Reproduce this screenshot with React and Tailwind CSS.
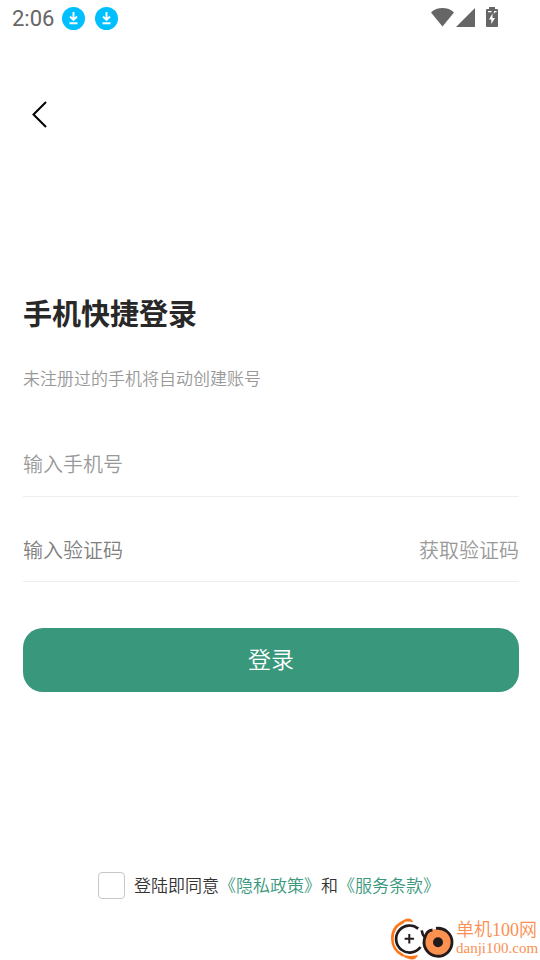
import { useState } from "react";

function StatusBar() {
  return (
    <div className="flex h-9 items-center justify-between pl-3 pr-10 text-[#666666]">
      <div className="flex items-center">
        <span className="w-[50px] pt-[2px] font-[Roboto,sans-serif] text-[22px] font-normal leading-6">2:06</span>
        <div className="flex gap-[10px]">
          <DownloadBadge />
          <DownloadBadge />
        </div>
      </div>
      <svg width="70" height="24" viewBox="0 0 70 24" fill="currentColor" aria-hidden="true">
        <path d="M1 6.500 C7 .6 18 .6 24 6.500 L12.500 20.500 Z" />
        <path d="M45 2 V21 H26 Z" />
        <path d="M59 1 h6 v2 h2 a1 1 0 0 1 1 1 v16 a1 1 0 0 1 -1 1 h-10 a1 1 0 0 1 -1 -1 V4 a1 1 0 0 1 1 -1 h2 Z" />
        <path d="M62.500 7.500 L59 13.500 h2.300 v4.500 L65 12 h-2.500 Z" fill="#fff" />
        <path d="M58 5 h3.500 v1.200 h-3.500 Z M64 5 h2.500 v1.200 h-1.500 l-1.200 2 Z" fill="#fff" />
      </svg>
    </div>
  );
}

function DownloadBadge() {
  return (
    <svg width="23" height="23" viewBox="0 0 23 23" fill="none" aria-hidden="true">
      <circle cx="11.500" cy="11.500" r="11.500" fill="#00bfff" />
      <path d="M11.500 5 V13 M8 9.500 L11.500 13 L15 9.500 M7.500 16.300 H15.500" stroke="#fff" strokeWidth="1.900" />
    </svg>
  );
}

function Watermark() {
  return (
    <div className="flex items-center justify-end pr-[2px] text-[#fb8f52]">
      <svg width="66" height="44" viewBox="0 0 66 44" fill="none" aria-hidden="true">
        <path d="M14 5.500 C6 9 2.300 15 2.300 22.500 C2.300 30 6 36 13 39.500" stroke="#ff7517" strokeWidth="2.600" />
        <path d="M11 7.500 C13 3 18 1.500 20.500 3 C22 4 23 5.500 23 6.200 C18 5 14 5.500 11 7.500 Z" fill="#ff7517" />
        <path d="M10.500 37 C15 40.500 21 40.500 28 39 C27 42 24.500 44 21 43.500 C16.500 42.500 12 40.500 10.500 37 Z" fill="#ff7517" />
        <path d="M28.200 12.600 A13.500 13.500 0 1 0 30.500 31" stroke="#231a1c" strokeWidth="2.700" />
        <path d="M19.300 18 V27.400 M14.600 22.700 H24" stroke="#231a1c" strokeWidth="2" />
        <circle cx="48" cy="26.300" r="13.500" fill="#fd914f" />
        <path d="M46 12.400 A14 14 0 1 1 34.300 23.500 C35.500 18 38 14 42.500 14" stroke="#231a1c" strokeWidth="2.800" />
        <path d="M31.700 14.300 C32 17 33 19.500 35 21.500" stroke="#231a1c" strokeWidth="2.600" />
        <circle cx="48" cy="26.300" r="5" fill="#231a1c" />
      </svg>
      <div className="w-[82px] whitespace-nowrap font-['Liberation_Serif','Noto_Sans_CJK_SC',serif]">
        <div className="text-[18px] leading-5">单机100网</div>
        <div className="text-[15px] leading-4">danji100.com</div>
      </div>
    </div>
  );
}

export default function App() {
  const [phone, setPhone] = useState("");
  const [code, setCode] = useState("");
  const [agreed, setAgreed] = useState(false);

  return (
    <div className="flex min-h-screen flex-col bg-white font-['Noto_Sans_CJK_SC',sans-serif] font-[350]">
      <StatusBar />

      <header className="px-6 pt-[62px]">
        <button type="button" aria-label="返回" className="flex h-8 w-8 items-center justify-center">
          <svg width="18" height="28" viewBox="0 0 18 28" fill="none" stroke="#000" strokeWidth="2">
            <path d="M15 2 L2.500 14.500 L15 27" />
          </svg>
        </button>
      </header>

      <main className="flex grow flex-col pl-[23px] pr-[21px] pt-[162px]">
        <h1 className="text-[29px] font-bold leading-10 text-[#282828]">手机快捷登录</h1>
        <p className="mt-[34px] text-[17px] leading-6 text-[#999999]">未注册过的手机将自动创建账号</p>

        <form onSubmit={(e) => e.preventDefault()}>
          <div className="mt-10 flex h-[67px] items-center border-b border-[#eeeeee] pt-[2px]">
            <input
              type="tel"
              aria-label="手机号"
              placeholder="输入手机号"
              value={phone}
              onChange={(e) => setPhone(e.target.value)}
              className="w-full text-[20px] leading-8 text-[#282828] outline-none placeholder:text-[#999999]"
            />
          </div>
          <div className="mt-5 flex h-[65px] items-center border-b border-[#eeeeee] pt-[2px]">
            <input
              type="text"
              aria-label="验证码"
              placeholder="输入验证码"
              value={code}
              onChange={(e) => setCode(e.target.value)}
              className="min-w-0 grow text-[20px] leading-8 text-[#282828] outline-none placeholder:text-[#808080]"
            />
            <button type="button" className="shrink-0 text-[20px] leading-8 text-[#999999]">获取验证码</button>
          </div>
          <button type="submit" className="mt-[46px] h-16 w-full rounded-[20px] bg-[#39987c] pb-1 text-[23px] text-white">
            登录
          </button>
        </form>
      </main>

      <footer>
        <div className="flex items-center justify-center gap-[9px] pr-[2px] text-[17px] leading-7 text-[#333333]">
          <input
            id="agree"
            type="checkbox"
            checked={agreed}
            onChange={(e) => setAgreed(e.target.checked)}
            className="h-[27px] w-[27px] appearance-none rounded-[4px] border border-[#c8c8c8] checked:bg-[#39987c]"
          />
          <div>
            <label htmlFor="agree">登陆即同意</label>
            <a href="#privacy" className="text-[#39987c]">《隐私政策》</a>
            和
            <a href="#terms" className="text-[#39987c]">《服务条款》</a>
          </div>
        </div>
        <div className="pt-[17px]">
          <Watermark />
        </div>
      </footer>
    </div>
  );
}
